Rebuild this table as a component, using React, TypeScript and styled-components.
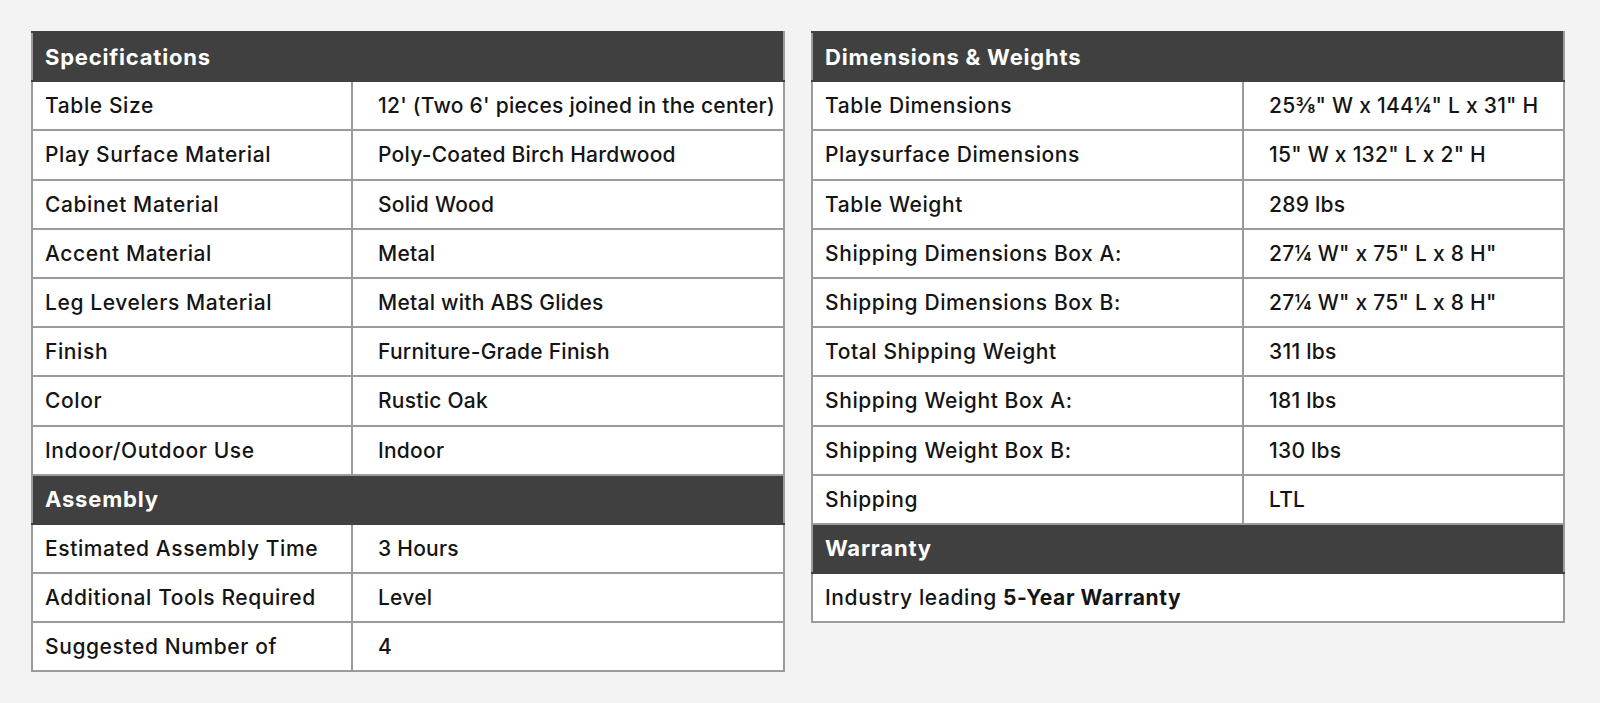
import React from 'react';
import styled, { createGlobalStyle } from 'styled-components';

type Row = [string, string];

const GlobalStyle = createGlobalStyle`
  html, body {
    margin: 0;
    padding: 0;
    background: #f3f3f3;
  }
  body {
    font-family: Inter, "Open Sans", sans-serif;
    color: #141414;
  }
`;

const Page = styled.div`
  display: grid;
  grid-template-columns: 754px 754px;
  column-gap: 26px;
  align-items: start;
  padding: 31px 0 0 31px;
  height: 703px;
  box-sizing: border-box;
`;

const SpecTable = styled.table`
  width: 100%;
  table-layout: fixed;
  border-collapse: collapse;
  background: #fff;
  border: 2px solid #9b9b9b;
`;

const HeadCell = styled.th`
  background: #404040;
  color: #fff;
  text-align: left;
  font-weight: 700;
  font-size: 22px;
  letter-spacing: 0.8px;
  height: 47.2px;
  padding: 0 12px;
  border: 2px solid #404040;
  border-left-color: #9b9b9b;
  border-right-color: #9b9b9b;
`;

const Cell = styled.td<{ $first?: boolean }>`
  height: 47.2px;
  padding: 0 0 0 ${(p) => (p.$first ? '12px' : '25px')};
  font-size: 21px;
  font-weight: 500;
  letter-spacing: ${(p) => (p.$first ? '0.6px' : '0.25px')};
  white-space: nowrap;
  border: 2px solid #9b9b9b;

  b {
    font-weight: 700;
  }
`;

const specifications: Row[] = [
  ['Table Size', "12' (Two 6' pieces joined in the center)"],
  ['Play Surface Material', 'Poly-Coated Birch Hardwood'],
  ['Cabinet Material', 'Solid Wood'],
  ['Accent Material', 'Metal'],
  ['Leg Levelers Material', 'Metal with ABS Glides'],
  ['Finish', 'Furniture-Grade Finish'],
  ['Color', 'Rustic Oak'],
  ['Indoor/Outdoor Use', 'Indoor'],
];

const assembly: Row[] = [
  ['Estimated Assembly Time', '3 Hours'],
  ['Additional Tools Required', 'Level'],
  ['Suggested Number of', '4'],
];

const dimensions: Row[] = [
  ['Table Dimensions', '25⅜" W x 144¼" L x 31" H'],
  ['Playsurface Dimensions', '15" W x 132" L x 2" H'],
  ['Table Weight', '289 lbs'],
  ['Shipping Dimensions Box A:', '27¼ W" x 75" L x 8 H"'],
  ['Shipping Dimensions Box B:', '27¼ W" x 75" L x 8 H"'],
  ['Total Shipping Weight', '311 lbs'],
  ['Shipping Weight Box A:', '181 lbs'],
  ['Shipping Weight Box B:', '130 lbs'],
  ['Shipping', 'LTL'],
];

const Section: React.FC<{ title: string; rows: Row[] }> = ({ title, rows }) => (
  <>
    <tr>
      <HeadCell colSpan={2}>{title}</HeadCell>
    </tr>
    {rows.map(([label, value]) => (
      <tr key={label}>
        <Cell $first>{label}</Cell>
        <Cell>{value}</Cell>
      </tr>
    ))}
  </>
);

const App: React.FC = () => (
  <>
    <GlobalStyle />
    <Page>
      <SpecTable>
        <colgroup>
          <col style={{ width: 320 }} />
          <col />
        </colgroup>
        <tbody>
          <Section title="Specifications" rows={specifications} />
          <Section title="Assembly" rows={assembly} />
        </tbody>
      </SpecTable>
      <SpecTable>
        <colgroup>
          <col style={{ width: 431 }} />
          <col />
        </colgroup>
        <tbody>
          <Section title="Dimensions &amp; Weights" rows={dimensions} />
          <tr>
            <HeadCell colSpan={2}>Warranty</HeadCell>
          </tr>
          <tr>
            <Cell $first colSpan={2}>
              Industry leading <b>5-Year Warranty</b>
            </Cell>
          </tr>
        </tbody>
      </SpecTable>
    </Page>
  </>
);

export default App;
